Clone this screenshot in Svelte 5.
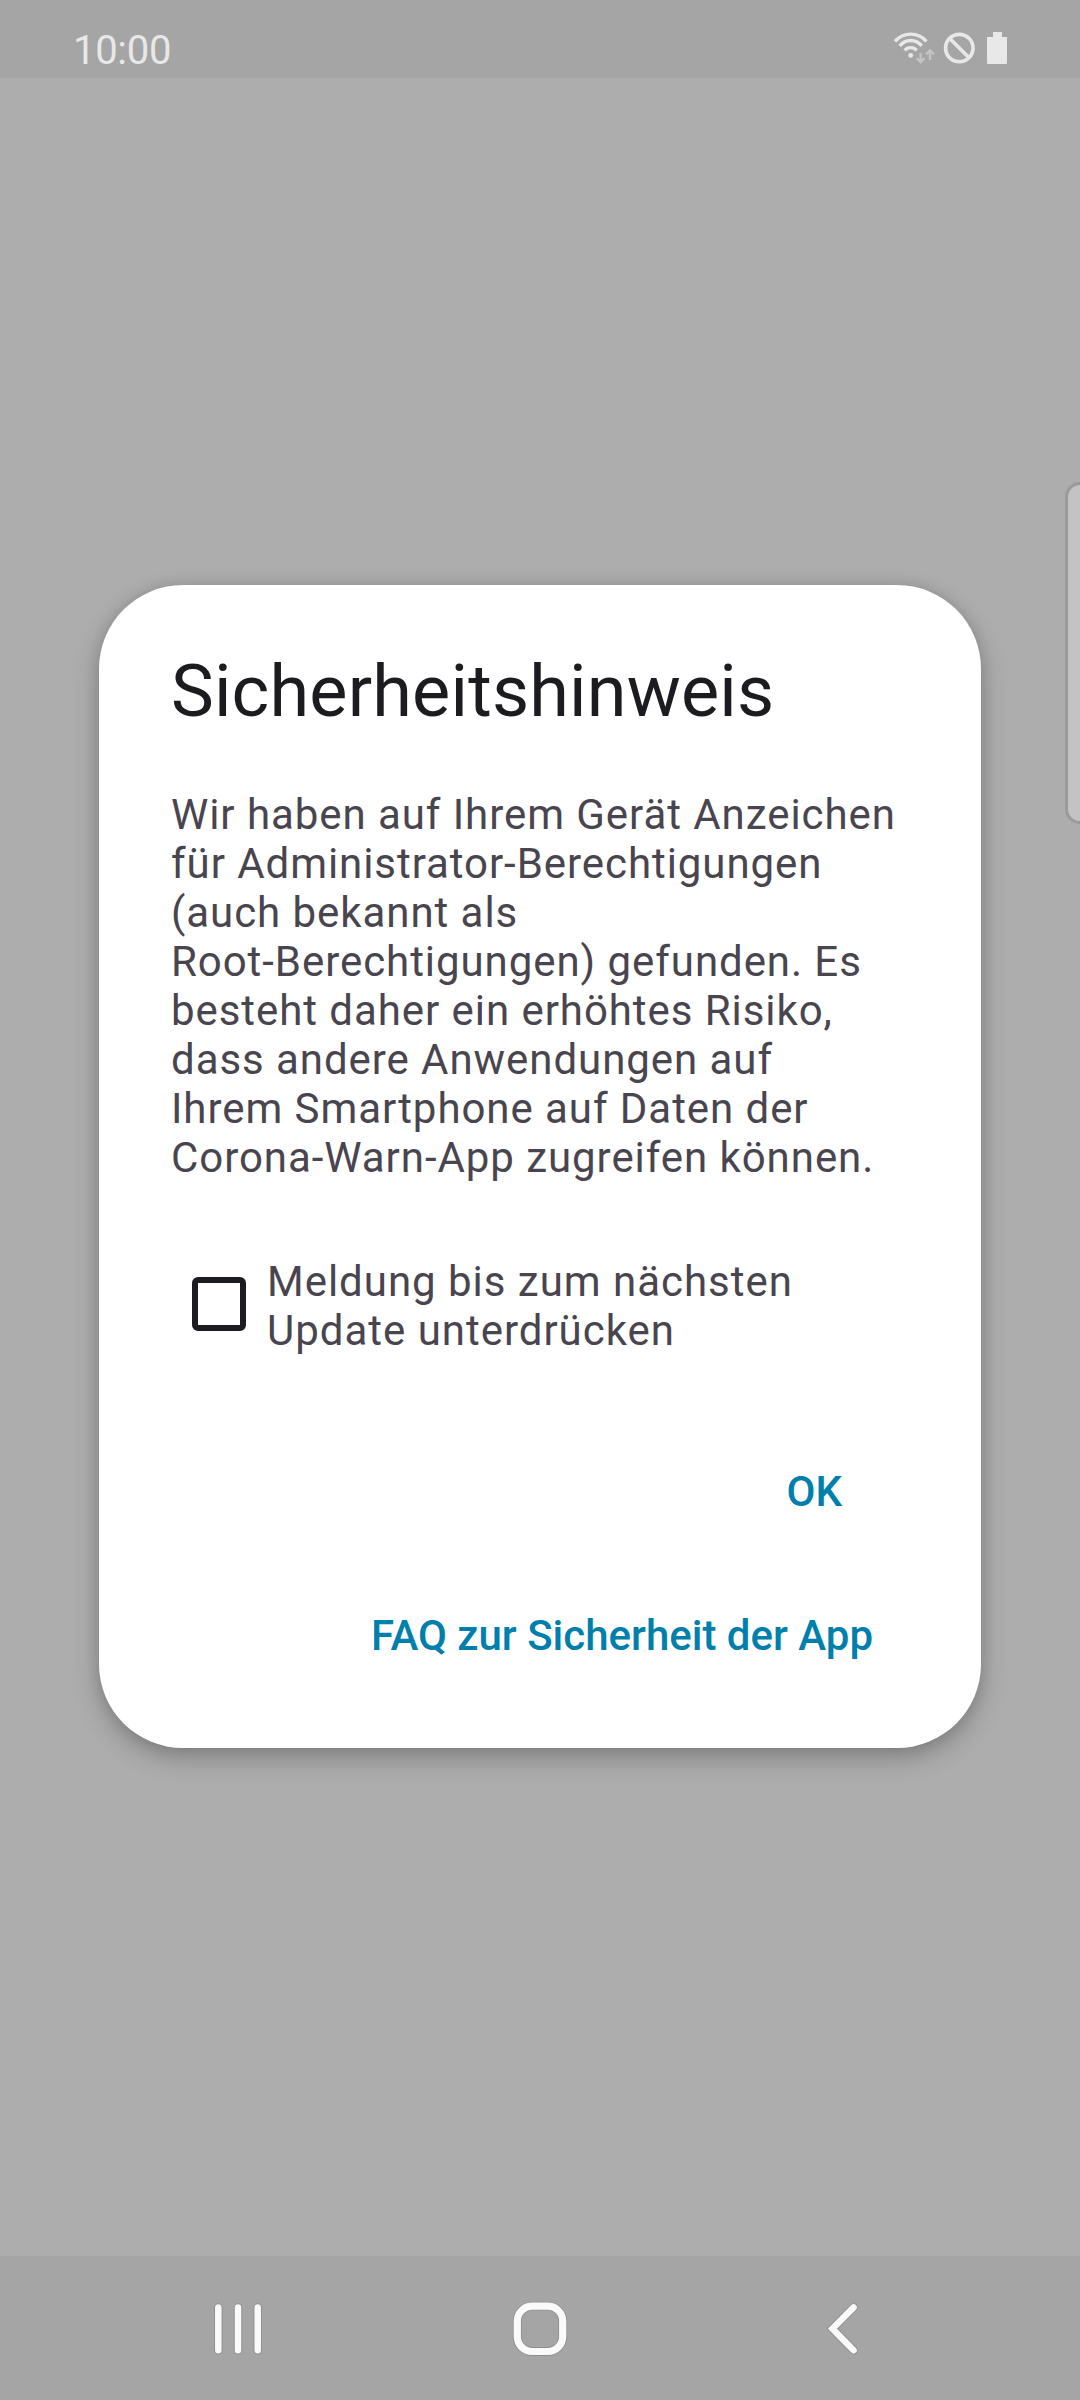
<script>
  let suppressed = $state(false);
  const time = '10:00';
  const lines = [
    'Wir haben auf Ihrem Gerät Anzeichen',
    'für Administrator-Berechtigungen',
    '(auch bekannt als',
    'Root-Berechtigungen) gefunden. Es',
    'besteht daher ein erhöhtes Risiko,',
    'dass andere Anwendungen auf',
    'Ihrem Smartphone auf Daten der',
    'Corona-Warn-App zugreifen können.'
  ];
</script>

<div class="screen">
  <header class="status">
    <span class="time">{time}</span>
    <svg class="status-icons" width="120" height="40" viewBox="0 0 120 40" aria-hidden="true">
      <g fill="none" stroke="#e8e8e8" stroke-width="3.4">
        <path d="M5 13.3A20.7 20.7 0 0 1 36.4 13.3" />
        <path d="M9.7 17.9A13.9 13.9 0 0 1 31.7 17.9" />
        <path d="M14.7 22.4A7.8 7.8 0 0 1 26.7 22.4" />
        <circle cx="69.3" cy="20" r="13.7" stroke-width="3.7" />
        <path d="M59.8 10.5 78.8 29.5" stroke-width="3.7" />
      </g>
      <circle cx="20.7" cy="27.4" r="2.4" fill="#e8e8e8" />
      <g fill="none" stroke="#c4c4c4" stroke-width="2.4">
        <path d="M30.6 25V34.2M26.7 30.2 30.6 34 34.5 30.2M40 32V22.5M36.1 26.3 40 22.5 43.9 26.3" />
      </g>
      <path d="M103 4h9v5h5v26a1 1 0 0 1-1 1H98a1 1 0 0 1-1-1V9h6z" fill="#e8e8e8" />
    </svg>
  </header>

  <main class="stage">
    <div class="edge-handle"></div>
    <section class="dialog" role="dialog" aria-labelledby="dialog-title">
      <h1 id="dialog-title">Sicherheitshinweis</h1>
      <p class="message">
        {#each lines as line}<span class="line">{line}</span>{/each}
      </p>
      <label class="option">
        <input type="checkbox" bind:checked={suppressed} />
        <span>Meldung bis zum nächsten<br />Update unterdrücken</span>
      </label>
      <div class="actions">
        <button class="ok">OK</button>
        <button class="faq">FAQ zur Sicherheit der App</button>
      </div>
    </section>
  </main>

  <nav class="navbar">
    <svg width="60" height="60" viewBox="0 0 60 60" aria-hidden="true">
      <path class="halo" d="M10.3 8.4V51.2M30 8.4V51.2M49.7 8.4V51.2" />
      <path class="ink" d="M10.3 8.4V51.2M30 8.4V51.2M49.7 8.4V51.2" />
    </svg>
    <svg width="60" height="60" viewBox="0 0 60 60" aria-hidden="true">
      <rect class="halo wide" x="7.3" y="7.1" width="45.4" height="45.4" rx="15" />
      <rect class="ink wide" x="7.3" y="7.1" width="45.4" height="45.4" rx="15" />
    </svg>
    <svg width="60" height="60" viewBox="0 0 60 60" aria-hidden="true">
      <path class="halo" d="M41.6 8.4 20.4 29.8 41.6 51.2" />
      <path class="ink" d="M41.6 8.4 20.4 29.8 41.6 51.2" />
    </svg>
  </nav>
</div>

<style>
  :global(body) {
    background: #adadad;
  }

  .screen {
    display: flex;
    flex-direction: column;
    width: 1080px;
    height: 2400px;
    overflow: hidden;
    background: #adadad;
    font-family: Roboto, "Liberation Sans", sans-serif;
  }

  .status {
    box-sizing: border-box;
    display: flex;
    justify-content: space-between;
    height: 78px;
    padding: 26px 70px 0 73px;
    background: #a5a5a5;
  }

  .time {
    margin-top: 1px;
    font-size: 40px;
    line-height: 48px;
    letter-spacing: -0.3px;
    color: #e8e8e8;
  }

  .status-icons {
    margin-top: 2px;
  }

  .stage {
    position: relative;
    flex: 1;
    display: flex;
    justify-content: center;
    align-items: flex-start;
    padding-top: 507px;
    box-sizing: border-box;
  }

  .edge-handle {
    position: absolute;
    top: 404px;
    right: -20px;
    box-sizing: border-box;
    width: 35px;
    height: 342px;
    border: 3px solid #9a9a9a;
    border-radius: 15px;
    background: #c3c3c3;
  }

  .dialog {
    box-sizing: border-box;
    display: flex;
    flex-direction: column;
    width: 882px;
    height: 1163px;
    padding: 65px 72px 0;
    border-radius: 84px;
    background: #fff;
    box-shadow: 0 10px 26px rgba(0, 0, 0, 0.24), 0 0 14px rgba(0, 0, 0, 0.1);
  }

  h1 {
    margin: 0;
    font-size: 72px;
    line-height: 84px;
    font-weight: 400;
    letter-spacing: 0.18px;
    color: #1c1b1f;
  }

  .message {
    margin: 56px 0 0;
    font-size: 42px;
    line-height: 49px;
    letter-spacing: 0.94px;
    color: #49454f;
  }

  .line {
    display: block;
    white-space: nowrap;
  }

  .option {
    display: flex;
    align-items: center;
    gap: 21px;
    margin-top: 75px;
    padding-left: 21px;
    font-size: 42px;
    line-height: 49px;
    letter-spacing: 0.98px;
    color: #49454f;
    white-space: nowrap;
  }

  input {
    appearance: none;
    box-sizing: border-box;
    width: 54px;
    height: 54px;
    margin: -5px 0 0;
    border: 6px solid #1c1b1f;
    border-radius: 6px;
  }

  .actions {
    display: flex;
    flex-direction: column;
    align-items: flex-end;
    margin-top: 64px;
  }

  button {
    height: 144px;
    border: 0;
    background: none;
    font: 500 42px/49px Roboto, sans-serif;
    color: #007fad;
  }

  .ok {
    padding: 0 67px;
  }

  .faq {
    padding: 0 36px;
  }

  .navbar {
    box-sizing: border-box;
    display: flex;
    justify-content: center;
    gap: 242px;
    height: 144px;
    padding-top: 43px;
    background: #a5a5a5;
  }

  .ink,
  .halo {
    fill: none;
    stroke-linecap: round;
    stroke-linejoin: miter;
  }

  .ink {
    stroke: #fafafa;
    stroke-width: 6.5;
  }

  .halo {
    stroke: #8e8e8e;
    stroke-width: 8.3;
  }

  .ink.wide {
    stroke-width: 7.2;
  }

  .halo.wide {
    stroke-width: 8.8;
  }
</style>
